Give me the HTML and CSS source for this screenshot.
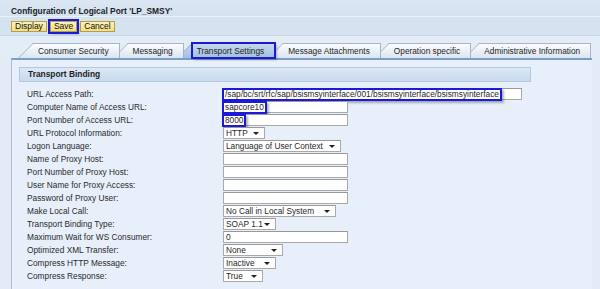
FILE: index.html
```html
<!DOCTYPE html>
<html lang="en">
<head>
    <meta charset="UTF-8">
    <title>Configuration of Logical Port 'LP_SMSY'</title>
    <link rel="stylesheet" href="styles.css">
</head>
<body>
    <div class="titlebar">Configuration of Logical Port 'LP_SMSY'</div>

    <div class="toolbar">
        <button class="btn">Display</button>
        <button class="btn btn-marked">Save</button>
        <button class="btn">Cancel</button>
    </div>

    <div class="tabs">
        <div class="tab">Consumer Security</div>
        <div class="tab">Messaging</div>
        <div class="tab active">Transport Settings</div>
        <div class="tab">Message Attachments</div>
        <div class="tab">Operation specific</div>
        <div class="tab">Administrative Information</div>
    </div>

    <div class="panel">
        <div class="section-head">Transport Binding</div>

        <div class="form">
            <label>URL Access Path:</label>
            <div class="field field-url"><span class="mark">/sap/bc/srt/rfc/sap/bsismsyinterface/001/bsismsyinterface/bsismsyinterface</span></div>

            <label>Computer Name of Access URL:</label>
            <div class="field"><span class="mark">sapcore10</span></div>

            <label>Port Number of Access URL:</label>
            <div class="field"><span class="mark">8000</span></div>

            <label>URL Protocol Information:</label>
            <div class="select sel-protocol">HTTP</div>

            <label>Logon Language:</label>
            <div class="select sel-language">Language of User Context</div>

            <label>Name of Proxy Host:</label>
            <div class="field"></div>

            <label>Port Number of Proxy Host:</label>
            <div class="field"></div>

            <label>User Name for Proxy Access:</label>
            <div class="field"></div>

            <label>Password of Proxy User:</label>
            <div class="field"></div>

            <label>Make Local Call:</label>
            <div class="select sel-local">No Call in Local System</div>

            <label>Transport Binding Type:</label>
            <div class="select sel-binding">SOAP 1.1</div>

            <label>Maximum Wait for WS Consumer:</label>
            <div class="field">0</div>

            <label>Optimized XML Transfer:</label>
            <div class="select sel-xml">None</div>

            <label>Compress HTTP Message:</label>
            <div class="select sel-http">Inactive</div>

            <label>Compress Response:</label>
            <div class="select sel-response">True</div>
        </div>
    </div>
</body>
</html>
```

FILE: styles.css
```css
:root {
    --mark-color: #1b1bd6;
    --tab-border: #a3b6cb;
    --field-border: #a9a9a9;
    --text-color: #1f1f1f;
}

* {
    box-sizing: border-box;
}

body {
    margin: 0;
    font-family: "Liberation Sans", Arial, sans-serif;
    font-size: 8.3px;
    color: var(--text-color);
    background: #e2ebf6;
    overflow: hidden;
}

.titlebar {
    height: 17px;
    padding: 5px 0 0 11px;
    line-height: 12px;
    font-size: 8.4px;
    font-weight: bold;
    background: linear-gradient(#dbe6f2, #d4e1ef);
    border-bottom: 1px solid #eaf1f9;
}

.toolbar {
    height: 19px;
    display: flex;
    gap: 3px;
    padding: 4px 0 0 11px;
    background: #d5e2f0;
    border-bottom: 1px solid #c6d6e8;
}

.btn {
    height: 11px;
    padding: 0 3px;
    font-family: inherit;
    font-size: 8.5px;
    line-height: 9px;
    color: #111;
    background: linear-gradient(#fdf2b8, #f2de85);
    border: 1px solid #b99c43;
    cursor: pointer;
}

.btn-marked {
    outline: 2px solid var(--mark-color);
    outline-offset: 0;
    box-shadow: 2px 2px 2px rgba(0, 0, 0, 0.3);
}

.tabs {
    display: flex;
    height: 22px;
    padding: 7px 0 0 33px;
    background: #e4edf7;
}

.tab {
    position: relative;
    height: 15px;
    padding: 0 10px 0 5px;
    margin-right: 8px;
    line-height: 14px;
    font-size: 8.3px;
    white-space: nowrap;
    background: linear-gradient(#fbfcfe, #dbe5f0);
    border: 1px solid var(--tab-border);
    border-left: 0;
    border-bottom: 0;
}

.tab::before {
    content: "";
    position: absolute;
    top: -1px;
    bottom: 0;
    left: -15px;
    width: 20px;
    background: inherit;
    border-top: 1px solid var(--tab-border);
    border-left: 1px solid var(--tab-border);
    transform: skewX(-45deg);
    transform-origin: bottom left;
    z-index: -1;
}

.tab:nth-child(1) { z-index: 6; }
.tab:nth-child(2) { z-index: 5; }
.tab:nth-child(3) { z-index: 4; }
.tab:nth-child(4) { z-index: 3; }
.tab:nth-child(5) { z-index: 2; }
.tab:nth-child(6) { z-index: 1; }

.tab.active {
    background: linear-gradient(#c6d9ee, #a2bfe0);
    border-color: #8eaacb;
    outline: 2px solid var(--mark-color);
    outline-offset: -1px;
    box-shadow: 2px 2px 2px rgba(0, 0, 0, 0.25);
}

.tab.active::before {
    border-color: #7f9dc2;
}

.panel {
    width: 581px;
    height: 240px;
    margin-left: 11px;
    padding-top: 7px;
    background: #e7f0fa;
    border-top: 2px solid #7b9dc6;
    border-left: 1px solid #a9c0da;
}

.section-head {
    width: 512px;
    height: 15px;
    margin-left: 7px;
    padding-left: 8px;
    line-height: 13px;
    font-size: 8.4px;
    font-weight: bold;
    background: linear-gradient(#dce8f5, #c8daee);
    border: 1px solid #b4c9e1;
}

.form {
    display: grid;
    grid-template-columns: 196px auto;
    grid-auto-rows: 13px;
    margin-top: 6px;
    padding-left: 15px;
}

.form label {
    line-height: 13px;
    color: #2a2a2a;
}

.field,
.select {
    position: relative;
    display: flex;
    align-items: center;
    height: 12px;
    padding-left: 2px;
    background: #fff;
    border: 1px solid var(--field-border);
    border-top-color: #999;
    white-space: nowrap;
}

.field {
    width: 125px;
}

.field-url {
    width: 299px;
}

.mark {
    display: inline-flex;
    align-items: center;
    height: 13px;
    margin: -1px 0 -1px -4px;
    padding: 0 1px;
    border: 2px solid var(--mark-color);
    background: #fff;
    box-shadow: 2px 2px 2px rgba(0, 0, 0, 0.3);
}

.select::after {
    content: "";
    position: absolute;
    right: 5px;
    top: 4px;
    border-left: 3px solid transparent;
    border-right: 3px solid transparent;
    border-top: 3px solid #222;
}

.sel-protocol { width: 42px; }
.sel-language { width: 118px; }
.sel-local { width: 113px; }
.sel-binding { width: 53px; }
.sel-xml { width: 60px; }
.sel-http { width: 53px; }
.sel-response { width: 40px; }
```
